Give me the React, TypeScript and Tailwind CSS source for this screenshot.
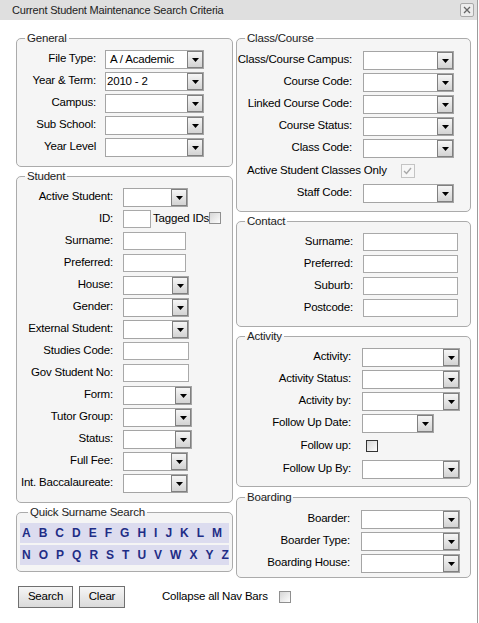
import React from "react"
import clsx from "clsx"

function Arrow() {
  return (
    <svg width="7" height="4" viewBox="0 0 7 4" className="mt-[1px]">
      <path d="M0 0h7L3.5 4z" fill="#000" />
    </svg>
  )
}

function Select({ className, value, valueClass }: { className: string; value?: string; valueClass?: string }) {
  return (
    <div className={clsx("flex h-[19px] border border-[#a5a5a5] bg-white", className)}>
      <div className={clsx("flex-1 truncate leading-[17px] text-black", valueClass ?? "pl-[2px]")}>{value}</div>
      <div className="flex w-[16px] items-center justify-center border border-[#808080] bg-linear-to-b from-[#f6f6f6] to-[#d3d3d3]">
        <Arrow />
      </div>
    </div>
  )
}

function TextBox({ className }: { className: string }) {
  return <input readOnly className={clsx("h-[18px] border border-[#a9a9a9] bg-white outline-none", className)} />
}

function Check({ className }: { className?: string }) {
  return (
    <span
      className={clsx(
        "inline-block h-[12px] w-[12px] shrink-0 border bg-linear-to-br from-[#d6d6d6] to-[#fdfdfd]",
        className ?? "border-[#8f8f8f]",
      )}
    />
  )
}

function Row({ label, lw, tall, children }: { label: string; lw: string; tall?: boolean; children: React.ReactNode }) {
  return (
    <div className={clsx("flex items-center", tall ? "h-[24px]" : "h-[22px]")}>
      <div className={clsx("shrink-0 text-right whitespace-nowrap", lw)}>{label}</div>
      {children}
    </div>
  )
}

function Group({ title, className, children }: { title: string; className?: string; children: React.ReactNode }) {
  return (
    <fieldset className={clsx("rounded-[5px] border border-[#ababab] bg-[#f5f5f5]", className)}>
      <legend className="ml-[8px] px-[2px] leading-[14px] text-[#222]">{title}</legend>
      {children}
    </fieldset>
  )
}

const rowA = "ABCDEFGHIJKLM".split("")
const rowB = "NOPQRSTUVWXYZ".split("")

export default function App() {
  const gen = "w-[88px] pr-[9px]"
  const stu = "w-[106px] pr-[10px]"
  const cls = "w-[126px] pr-[11px]"
  const con = "w-[126px] pr-[10px]"
  const act = "w-[125px] pr-[11px]"
  const brd = "w-[124px] pr-[11px]"

  return (
    <div className="h-[623px] w-[478px] border-r border-[#9c9c9c] bg-white font-['Liberation_Sans',Arial,sans-serif] text-[11.5px] tracking-[-0.2px] text-black">
      {/* title bar */}
      <div className="flex h-[20px] items-center justify-between bg-[#dfdfdf] pl-[12px] pr-[3px]">
        <span className="text-[11px] text-[#222]">Current Student Maintenance Search Criteria</span>
        <button className="flex h-[14px] w-[14px] items-center justify-center rounded-[2px] border border-[#a8a8a8] bg-[#ececec]">
          <svg width="8" height="8" viewBox="0 0 8 8">
            <path d="M1 1l6 6M7 1L1 7" stroke="#666" strokeWidth="1.3" />
          </svg>
        </button>
      </div>

      <div className="grid grid-cols-[217px_235px] items-start gap-x-[3px] pl-[16px] pt-[11px]">
        {/* left column */}
        <div className="flex flex-col">
          <Group title="General" className="pt-[3px] pb-[8px]">
            <Row label="File Type:" lw={gen}>
              <Select className="w-[99px]" value="A / Academic" valueClass="pl-[4px]" />
            </Row>
            <Row label="Year & Term:" lw={gen}>
              <Select className="w-[99px]" value="2010 - 2" valueClass="pl-[1px]" />
            </Row>
            <Row label="Campus:" lw={gen}>
              <Select className="w-[99px]" />
            </Row>
            <Row label="Sub School:" lw={gen}>
              <Select className="w-[99px]" />
            </Row>
            <Row label="Year Level" lw={gen}>
              <Select className="w-[99px]" />
            </Row>
          </Group>

          <Group title="Student" className="mt-[2px] pt-[3px] pb-[8px]">
            <Row label="Active Student:" lw={stu}>
              <Select className="w-[65px]" />
            </Row>
            <Row label="ID:" lw={stu}>
              <TextBox className="w-[28px]" />
              <span className="ml-[2px]">Tagged IDs</span>
              <Check className="mb-[3px] border-[#8f8f8f]" />
            </Row>
            <Row label="Surname:" lw={stu}>
              <TextBox className="w-[63px]" />
            </Row>
            <Row label="Preferred:" lw={stu}>
              <TextBox className="w-[63px]" />
            </Row>
            <Row label="House:" lw={stu}>
              <Select className="w-[66px]" />
            </Row>
            <Row label="Gender:" lw={stu}>
              <Select className="w-[66px]" />
            </Row>
            <Row label="External Student:" lw={stu}>
              <Select className="w-[66px]" />
            </Row>
            <Row label="Studies Code:" lw={stu}>
              <TextBox className="w-[66px]" />
            </Row>
            <Row label="Gov Student No:" lw={stu}>
              <TextBox className="w-[66px]" />
            </Row>
            <Row label="Form:" lw={stu}>
              <Select className="w-[69px]" />
            </Row>
            <Row label="Tutor Group:" lw={stu}>
              <Select className="w-[69px]" />
            </Row>
            <Row label="Status:" lw={stu}>
              <Select className="w-[69px]" />
            </Row>
            <Row label="Full Fee:" lw={stu}>
              <Select className="w-[65px]" />
            </Row>
            <Row label="Int. Baccalaureate:" lw={stu}>
              <Select className="w-[65px]" />
            </Row>
          </Group>

          <Group title="Quick Surname Search" className="mt-[2px] px-[3px] pt-[4px] pb-[6px]">
            <div className="flex flex-col gap-[2px] text-[12px] font-bold tracking-normal text-[#1f2d86]">
              <div className="flex h-[20px] items-center gap-[8px] bg-[#dcdcef] pl-[2px]">
                {rowA.map((l) => (
                  <span key={l}>{l}</span>
                ))}
              </div>
              <div className="flex h-[20px] items-center gap-[8px] bg-[#dcdcef] pl-[2px]">
                {rowB.map((l) => (
                  <span key={l}>{l}</span>
                ))}
              </div>
            </div>
          </Group>
        </div>

        {/* right column */}
        <div className="flex flex-col">
          <Group title="Class/Course" className="pt-[4px] pb-[7px]">
            <Row label="Class/Course Campus:" lw={cls}>
              <Select className="w-[91px]" />
            </Row>
            <Row label="Course Code:" lw={cls}>
              <Select className="w-[91px]" />
            </Row>
            <Row label="Linked Course Code:" lw={cls}>
              <Select className="w-[91px]" />
            </Row>
            <Row label="Course Status:" lw={cls}>
              <Select className="w-[91px]" />
            </Row>
            <Row label="Class Code:" lw={cls}>
              <Select className="w-[91px]" />
            </Row>
            <div className="flex h-[23px] items-center pl-[10px]">
              <span>Active Student Classes Only</span>
              <span className="ml-[14px] flex h-[14px] w-[14px] items-center justify-center border border-[#c4c4c4] bg-[#f7f7f7]">
                <svg width="9" height="8" viewBox="0 0 9 8">
                  <path d="M1 4l2.5 2.5L8 1" stroke="#a8a8a8" strokeWidth="1.4" fill="none" />
                </svg>
              </span>
            </div>
            <Row label="Staff Code:" lw={cls}>
              <Select className="w-[91px]" />
            </Row>
          </Group>

          <Group title="Contact" className="mt-[2px] pt-[3px] pb-[7px]">
            <Row label="Surname:" lw={con}>
              <TextBox className="w-[95px]" />
            </Row>
            <Row label="Preferred:" lw={con}>
              <TextBox className="w-[95px]" />
            </Row>
            <Row label="Suburb:" lw={con}>
              <TextBox className="w-[95px]" />
            </Row>
            <Row label="Postcode:" lw={con}>
              <TextBox className="w-[95px]" />
            </Row>
          </Group>

          <Group title="Activity" className="mt-[2px] pt-[3px] pb-[6px]">
            <Row label="Activity:" lw={act}>
              <Select className="w-[98px]" />
            </Row>
            <Row label="Activity Status:" lw={act}>
              <Select className="w-[98px]" />
            </Row>
            <Row label="Activity by:" lw={act}>
              <Select className="w-[98px]" />
            </Row>
            <Row label="Follow Up Date:" lw={act}>
              <Select className="w-[72px]" />
            </Row>
            <Row label="Follow up:" lw={act} tall>
              <Check className="ml-[4px] border-[#333333]" />
            </Row>
            <Row label="Follow Up By:" lw={act}>
              <Select className="w-[98px]" />
            </Row>
          </Group>

          <Group title="Boarding" className="mt-[3px] pt-[4px] pb-[3px]">
            <Row label="Boarder:" lw={brd}>
              <Select className="w-[99px]" />
            </Row>
            <Row label="Boarder Type:" lw={brd}>
              <Select className="w-[99px]" />
            </Row>
            <Row label="Boarding House:" lw={brd}>
              <Select className="w-[99px]" />
            </Row>
          </Group>
        </div>
      </div>

      {/* actions */}
      <div className="mt-[8px] flex items-center pl-[18px]">
        <button className="h-[22px] w-[55px] border border-[#707070] bg-linear-to-b from-[#f6f6f6] to-[#dadada]">
          Search
        </button>
        <button className="ml-[6px] h-[22px] w-[46px] border border-[#707070] bg-linear-to-b from-[#f6f6f6] to-[#dadada]">
          Clear
        </button>
        <span className="ml-[37px]">Collapse all Nav Bars</span>
        <Check className="ml-[11px] border-[#8f8f8f]" />
      </div>
    </div>
  )
}
